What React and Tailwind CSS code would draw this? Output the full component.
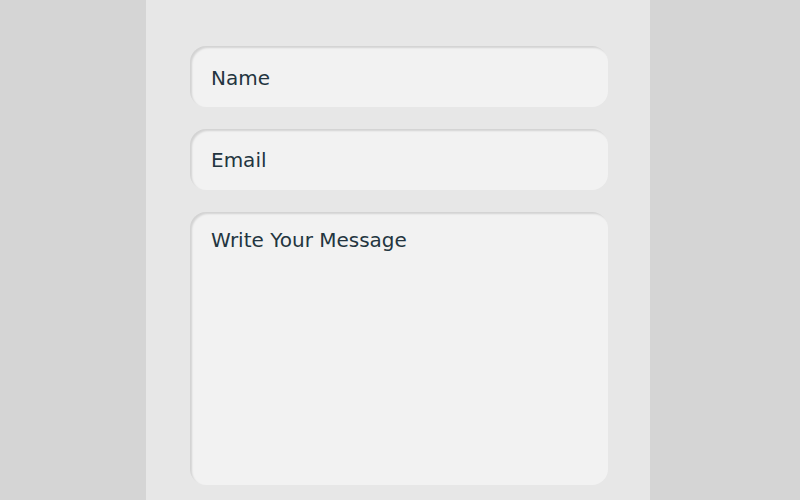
export default function App() {
  const field =
    "w-full rounded-[16px] bg-[#f2f2f2] shadow-[inset_2px_2px_2px_rgba(0,0,0,0.13)] text-[#233540] text-[20px] pl-[21px] pr-[21px]";
  return (
    <div className="w-[800px] h-[500px] bg-[#d5d5d5] flex overflow-hidden" style={{ fontFamily: '"DejaVu Sans", Verdana, sans-serif' }}>
      <div className="ml-[146px] w-[504px] h-full bg-[#e7e7e7] pt-[46px] pl-[44px] pr-[42px] flex flex-col gap-[22px]">
        <div className={field + " h-[61px] flex items-center pt-[3px]"}>Name</div>
        <div className={field + " h-[61px] flex items-center pt-[1px]"}>Email</div>
        <div className={field + " h-[273px] pt-[13px]"}>Write Your Message</div>
      </div>
    </div>
  );
}
